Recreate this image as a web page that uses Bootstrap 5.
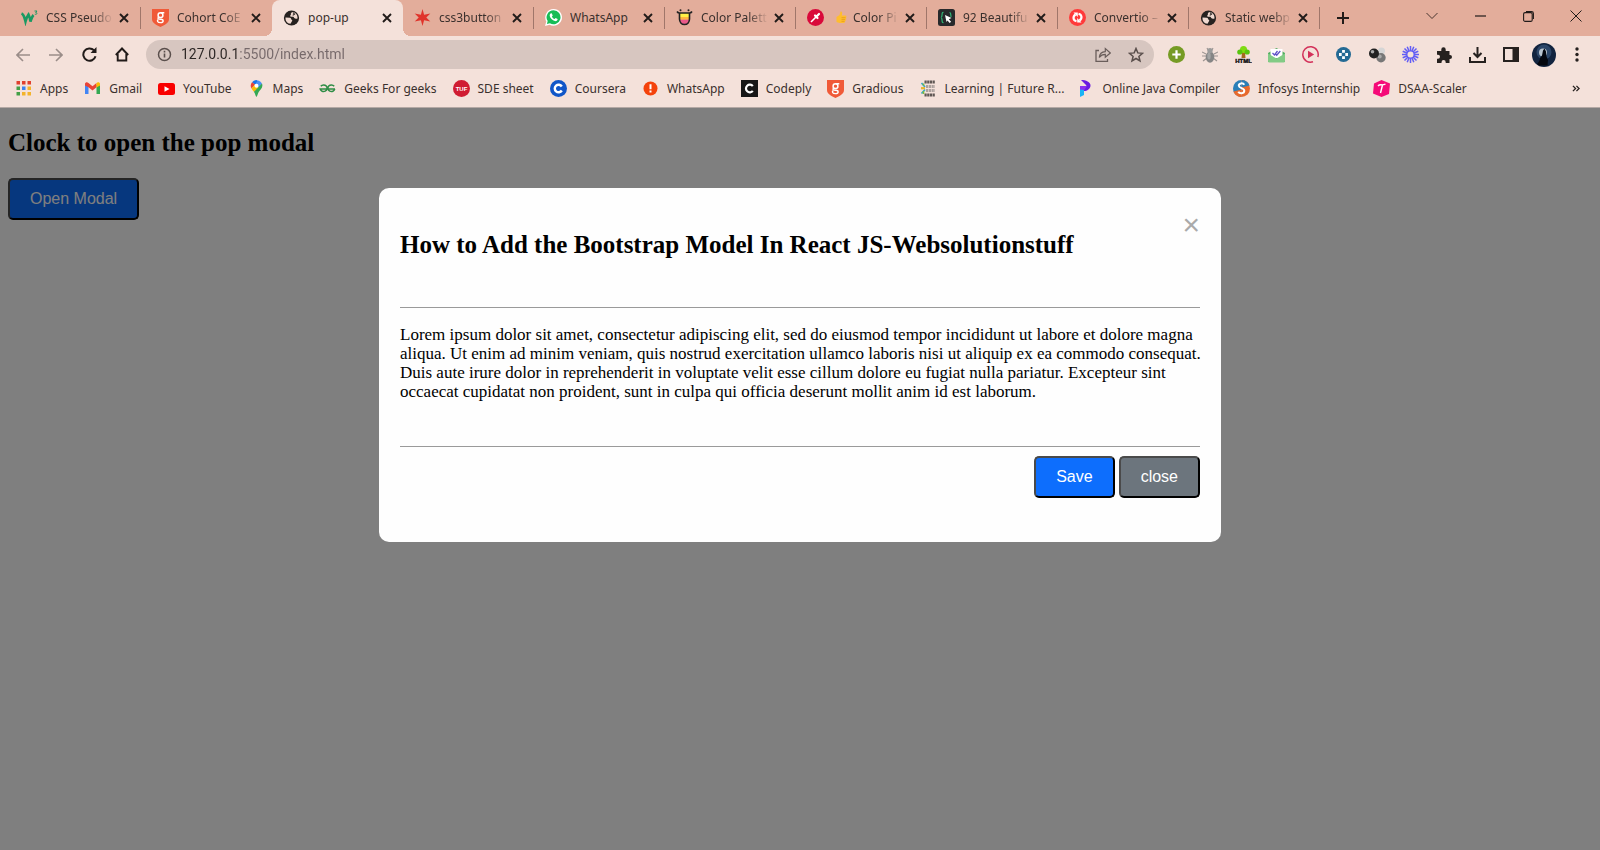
<!DOCTYPE html>
<html lang="en">
<head>
<meta charset="utf-8">
<meta name="viewport" content="width=device-width, initial-scale=1">
<title>pop-up</title>
<link rel="stylesheet" href="https://cdn.jsdelivr.net/npm/bootstrap@5.3.0/dist/css/bootstrap.min.css">
<script src="https://cdn.jsdelivr.net/npm/bootstrap@5.3.0/dist/js/bootstrap.bundle.min.js"></script>
<style>
  :root { --strip: #e3ad9b; --bar: #f4e1da; --ink: #3a302d; }
  body { font: 12px/18px "Noto Sans", sans-serif; color: var(--ink); background: #808080; }
  button { color: inherit; }
  svg { display: block; flex: none; }
  .bare { border: 0; background: none; padding: 0; display: flex; align-items: center; justify-content: center; }

  .tabstrip { background: var(--strip); height: 36px; padding-left: 10px; }
  .tab { flex: 0 1 131px; min-width: 0; height: 36px; padding: 0 11px 1px 11px; gap: 6px; position: relative; }
  .tab a { flex: 1 1 0; min-width: 0; gap: 8px; color: inherit; text-decoration: none; }
  .tab-name { flex: 1 1 0; overflow: hidden; white-space: nowrap;
    -webkit-mask-image: linear-gradient(to right, #000 70%, transparent); mask-image: linear-gradient(to right, #000 70%, transparent); }
  .tab-name.full { -webkit-mask-image: none; mask-image: none; }
  .tab.split { border-right: 1px solid #a97d70; border-image: linear-gradient(transparent 8px, #a0766a 8px, #a0766a 28px, transparent 28px) 1; }
  .tab.current { background: var(--bar); border-radius: 8px 8px 0 0; }
  .tab.current::before, .tab.current::after { content: ""; position: absolute; bottom: 0; width: 8px; height: 8px; }
  .tab.current::before { right: 100%; background: radial-gradient(circle at 0 0, transparent 8px, var(--bar) 8px); }
  .tab.current::after { left: 100%; background: radial-gradient(circle at 100% 0, transparent 8px, var(--bar) 8px); }
  .win { width: 48px; height: 32px; }
  .plus { width: 46px; }

  .toolbar { background: var(--bar); height: 37px; padding: 0 6px; }
  .tool { flex: 1 1 33px; height: 34px; }
  .travel { flex: 0 0 133px; }
  .extras { flex: 0 0 434px; }
  .address { background: #d7c6c0; border-radius: 15px; height: 29px; padding: 0 2px 0 11px; margin: 0 6px 0 7px; }
  .address .tool { flex: 0 0 33px; }
  .address input { border: 0; outline: 0; font: 14px/29px Roboto, sans-serif; height: 29px; padding: 0; margin-left: 9px; min-width: 0;
    background: linear-gradient(to right, #2c2624 58px, #76696a 58px); -webkit-background-clip: text; background-clip: text; color: transparent; }

  .bookmarks { background: var(--bar); height: 35px; padding: 0 20px 3px 15px; gap: 16px; border-bottom: 1px solid #b5a9a5; }
  .bookmarks .tail { gap: 13px; }
  .bookmarks a { gap: 8px; color: inherit; text-decoration: none; white-space: nowrap; }

  .page { font: 17px/19px "Liberation Serif", serif; color: #000; padding: 21px 8px; }
  .page h2 { font: bold 25px/28px "Liberation Serif", serif; margin: 0; }
  .page > h2 { margin-bottom: 21px; }
  .push { font: 16px/20px "Liberation Sans", sans-serif; color: #fff; border: 2px outset #000; border-color: #4a4a4a #000 #000 #4a4a4a; border-radius: 5px; padding: 9px 20px; }
  .push.blue { background: #0d6efd; }
  .push.grey { background: #6c757d; }
  .shade { position: absolute; inset: 0; background: rgba(0,0,0,.5); padding-top: 80px; }
  .sheet { background: #fefefe; border-radius: 10px; width: 94%; max-width: 842px; padding: 31px 21px 44px; }
  .dismiss { color: #aaa; font: 30px/12px "Liberation Sans", sans-serif; }
  .sheet hr { margin: 0; border-top: 1px solid #9a9a9a; opacity: 1; }
  .sheet p { margin: 17px -4px 45px 0; }
  .choices { gap: 4px; margin-top: 9px; }
</style>
</head>
<body class="d-flex flex-column min-vh-100">

<svg width="0" height="0" class="position-absolute" aria-hidden="true">
  <symbol id="x" viewBox="0 0 10 10"><path d="M1 1l8 8M9 1l-8 8" stroke="#211b19" stroke-width="1.9" fill="none"/></symbol>
  <symbol id="globe" viewBox="0 0 16 16"><circle cx="8" cy="8" r="7.6" fill="#26211f"/><path d="M2 7.500l4.500.3c1 .2 1.200 1 1.200 1.800 1.200.2 1.300 1.200.6 2L7 13.800C3.500 13.500 1.800 11 2 7.500zM9 1.900C7.500 2.500 7 3.500 7.500 4.500c-.8.600-1 1.500-.3 2.200 1 .4 2-.2 3 .3.500 1.800 2 2 3.800 1.400C14.300 5 12.500 2.500 9 1.900z" fill="#f0d9d0"/><path d="M9.500 2.500l1.500 1.700-1.800 1.200" fill="none" stroke="#26211f" stroke-width="1.100"/></symbol>
  <symbol id="gshield" viewBox="0 0 17 18"><path d="M0 0h17v10c0 4-4.500 6-8.500 8C4.500 16 0 14 0 10z" fill="#f05a38"/><circle cx="8.500" cy="6.200" r="2.400" fill="none" stroke="#fff" stroke-width="1.500"/><path d="M8.500 3.800h3.800M6.500 8.200c-1.200 1.600 0 2 2 2 3.500 0 3.500 3.400 0 3.400-3.300 0-3.600-2-2.300-3" fill="none" stroke="#fff" stroke-width="1.400"/></symbol>
</svg>

<header>
  <div class="tabstrip d-flex align-items-center">
    <div class="tab split d-flex align-items-center"><a href="#" class="d-flex align-items-center"><svg width="17" height="17" viewBox="0 0 17 17"><path d="M.5 4.500c2.500 1 3 4 4 8 .8-3 1.500-5 3-7 1 2 1.500 4 2 7 1-3 1.500-5 3-6.500" fill="none" stroke="#1a9a62" stroke-width="2.600"/><path d="M13.500 2h2.500l-1.300 1.500c2 0 1.600 2.200-.9 1.700" fill="none" stroke="#1a9a62" stroke-width="1"/></svg><span class="tab-name">CSS Pseudo</span></a><button class="bare" aria-label="Close tab"><svg width="10" height="10"><use href="#x"/></svg></button></div>
    <div class="tab d-flex align-items-center"><a href="#" class="d-flex align-items-center"><svg width="17" height="18"><use href="#gshield"/></svg><span class="tab-name">Cohort CoE</span></a><button class="bare" aria-label="Close tab"><svg width="10" height="10"><use href="#x"/></svg></button></div>
    <div class="tab current d-flex align-items-center"><a href="#" class="d-flex align-items-center"><svg width="17" height="16"><use href="#globe"/></svg><span class="tab-name full">pop-up</span></a><button class="bare" aria-label="Close tab"><svg width="10" height="10"><use href="#x"/></svg></button></div>
    <div class="tab split d-flex align-items-center"><a href="#" class="d-flex align-items-center"><svg width="17" height="17" viewBox="0 0 17 17"><path d="M8.500 0l1.600 5.700 6.200-1.200-4 4 4 4-6.200-1.200L8.500 17l-1.600-5.700-6.200 1.200 4-4-4-4 6.200 1.200z" fill="#e0342b"/></svg><span class="tab-name">css3button</span></a><button class="bare" aria-label="Close tab"><svg width="10" height="10"><use href="#x"/></svg></button></div>
    <div class="tab split d-flex align-items-center"><a href="#" class="d-flex align-items-center"><svg width="17" height="17" viewBox="0 0 17 17"><path d="M8.600 0a8.400 8.400 0 1 1-4 15.800L0 17l1.300-4.500A8.400 8.400 0 0 1 8.600 0z" fill="#fff"/><path d="M8.600 1.300a7 7 0 1 1-3.700 13L1.900 15l.8-2.900a7 7 0 0 1 5.900-10.800z" fill="#18bd56"/><path d="M5.500 4.500l1.200-.2 1 2.200-.8 1.200c.7 1.200 1.500 1.900 2.700 2.400l1-1 2 1c0 1.700-1.300 2.300-2.700 2C7.500 11.500 5 9 4.700 6.800c-.1-1 .2-1.800.8-2.300z" fill="#fff"/></svg><span class="tab-name full">WhatsApp</span></a><button class="bare" aria-label="Close tab"><svg width="10" height="10"><use href="#x"/></svg></button></div>
    <div class="tab split d-flex align-items-center"><a href="#" class="d-flex align-items-center"><svg width="17" height="17" viewBox="0 0 17 17"><path d="M3.500 4h10v6c0 3-2 5.500-5 5.500s-5-2.500-5-5.500z" fill="#fff046"/><path d="M3.500 8h10v2.500h-10z" fill="#ffb53e"/><path d="M3.600 10.500h9.800c-.4 3-2.200 5-4.900 5s-4.500-2-4.900-5z" fill="#ea5a8a"/><path d="M1 2.500C2 4 3 4 3.500 4h10c.5 0 1.500 0 2.500-1.500M3.500 4v6c0 3 2 5.500 5 5.500s5-2.500 5-5.500V4" fill="none" stroke="#222" stroke-width="1.600"/><circle cx="4.500" cy="1.300" r="1" fill="#222"/><circle cx="12.500" cy="1.300" r="1" fill="#222"/></svg><span class="tab-name">Color Palett</span></a><button class="bare" aria-label="Close tab"><svg width="10" height="10"><use href="#x"/></svg></button></div>
    <div class="tab split d-flex align-items-center"><a href="#" class="d-flex align-items-center"><svg width="17" height="17" viewBox="0 0 17 17"><circle cx="8.500" cy="8.500" r="8.500" fill="#d9093a"/><path d="M4 13l5.500-5.500" stroke="#fff" stroke-width="1.600"/><path d="M8 6.500l2.500 2.500M9.800 7.200L12 5" stroke="#fff" stroke-width="2.200" stroke-linecap="round"/></svg><span class="tab-name d-flex align-items-center gap-1"><svg width="17" height="15" viewBox="0 0 15 15"><path d="M3.500 7L6.500 5l1-3.500c1.800-.3 2 1 1.300 4h3.500c1.500 0 1.400 2 .5 2.200.8.500.5 1.900-.3 2 .5.700.1 1.700-.6 1.800.2.900-.4 1.500-1.400 1.500H6.500l-3-1z" fill="#ffbd2e"/><path d="M8.500 7.700h4M8.500 9.600h3.600M8.500 11.400h3" stroke="#dd8f13" stroke-width=".6"/></svg>Color Pi</span></a><button class="bare" aria-label="Close tab"><svg width="10" height="10"><use href="#x"/></svg></button></div>
    <div class="tab split d-flex align-items-center"><a href="#" class="d-flex align-items-center"><svg width="17" height="17" viewBox="0 0 17 17"><rect width="17" height="17" rx="2.500" fill="#28292b"/><path d="M5.500 3.500C3 3 5 8 3 8.500c2 .5 0 5.500 2.500 5M11.500 3.500c2 0 .8 3.500 1.800 4.500" stroke="#31b675" stroke-width="1.200" fill="none"/><path d="M7 6l6.500 3-2.700 1.200 2.300 2.600-1.400 1.200-2.200-2.600L8.500 13z" fill="#fff"/></svg><span class="tab-name">92 Beautifu</span></a><button class="bare" aria-label="Close tab"><svg width="10" height="10"><use href="#x"/></svg></button></div>
    <div class="tab split d-flex align-items-center"><a href="#" class="d-flex align-items-center"><svg width="17" height="17" viewBox="0 0 17 17"><circle cx="8.500" cy="8.500" r="8.500" fill="#ff3a3a"/><path d="M7.500 12.300C4 11.500 3.500 7.500 6.500 5.500M9.500 4.700c3.500.8 4 4.800 1 6.800" fill="none" stroke="#fff" stroke-width="2.200"/><path d="M4.500 3.500h4.300v4.600zM12.500 13.500H8.200V8.900z" fill="#fff"/></svg><span class="tab-name">Convertio –</span></a><button class="bare" aria-label="Close tab"><svg width="10" height="10"><use href="#x"/></svg></button></div>
    <div class="tab split d-flex align-items-center"><a href="#" class="d-flex align-items-center"><svg width="17" height="16"><use href="#globe"/></svg><span class="tab-name">Static webp</span></a><button class="bare" aria-label="Close tab"><svg width="10" height="10"><use href="#x"/></svg></button></div>
    <button class="bare win plus" aria-label="New tab"><svg width="12" height="12" viewBox="0 0 12 12"><path d="M6 0v12M0 6h12" stroke="#211b19" stroke-width="2"/></svg></button>
    <div class="d-flex ms-auto align-self-start">
      <button class="bare win" aria-label="Search tabs"><svg width="12" height="8" viewBox="0 0 12 8"><path d="M.5 1L6 6.500 11.500 1" fill="none" stroke="#49352f" stroke-width="1"/></svg></button>
      <button class="bare win" aria-label="Minimise"><svg width="11" height="2"><path d="M0 1h11" stroke="#211b19" stroke-width="1.200"/></svg></button>
      <button class="bare win" aria-label="Restore"><svg width="11" height="11" viewBox="0 0 11 11"><rect x=".6" y="1.600" width="8.600" height="8.800" rx="1.500" fill="none" stroke="#211b19" stroke-width="1.100"/><path d="M3 .6h5.500c1.300 0 1.900.8 1.900 1.900V8" fill="none" stroke="#211b19" stroke-width="1.100"/></svg></button>
      <button class="bare win" aria-label="Close window"><svg width="12" height="12" viewBox="0 0 12 12"><path d="M.5.5l11 11M11.500.5l-11 11" stroke="#211b19"/></svg></button>
    </div>
  </div>

  <nav class="toolbar d-flex align-items-center" aria-label="Browser toolbar">
    <div class="travel d-flex">
      <button class="bare tool" aria-label="Back"><svg width="14" height="14" viewBox="0 0 14 14"><path d="M14 7H1.500M7 1L1 7l6 6" fill="none" stroke="#9a8d89" stroke-width="1.600"/></svg></button>
      <button class="bare tool" aria-label="Forward"><svg width="14" height="14" viewBox="0 0 14 14"><path d="M0 7h12.500M7 1l6 6-6 6" fill="none" stroke="#9a8d89" stroke-width="1.600"/></svg></button>
      <button class="bare tool" aria-label="Reload"><svg width="15" height="15" viewBox="0 0 15 15"><path d="M13.500 9.300A6.200 6.200 0 1 1 12 3.300" fill="none" stroke="#211b19" stroke-width="2"/><path d="M14.500 0v6H8.500z" fill="#211b19"/></svg></button>
      <button class="bare tool" aria-label="Home"><svg width="14" height="15" viewBox="0 0 14 15"><path d="M2.700 7v6.500h8.600V7M.8 8L7 1.500 13.200 8" fill="none" stroke="#211b19" stroke-width="1.900"/></svg></button>
    </div>
    <div class="address d-flex align-items-center flex-grow-1">
      <svg width="15" height="15" viewBox="0 0 15 15"><circle cx="7.500" cy="7.500" r="6" fill="none" stroke="#5a4f4c" stroke-width="1.500"/><path d="M7.500 6.600v4M7.500 3.800v1.600" stroke="#5a4f4c" stroke-width="1.600"/></svg>
      <input class="flex-grow-1" type="text" aria-label="Address" value="127.0.0.1:5500/index.html">
      <button class="bare tool" aria-label="Share"><svg width="16" height="15" viewBox="0 0 16 15"><path d="M4 3.500H1v10.800h11.500V12" fill="none" stroke="#6a5e5b" stroke-width="1.300"/><path d="M4.300 10.500c.3-4 2.500-5.700 6-5.800V1.500L15.300 6l-5 4.300V7.400c-2.500 0-4.500.8-6 3.100z" fill="none" stroke="#6a5e5b" stroke-width="1.200"/></svg></button>
      <button class="bare tool" aria-label="Bookmark this page"><svg width="16" height="16" viewBox="0 0 16 16"><path d="M8 1.500l1.800 4.400 4.700.4-3.600 3.100 1.100 4.600L8 11.500 4 14l1.100-4.600L1.500 6.300l4.700-.4z" fill="none" stroke="#5a4f4c" stroke-width="1.500"/></svg></button>
    </div>
    <div class="extras d-flex">
      <button class="bare tool" aria-label="Add"><svg width="17" height="17" viewBox="0 0 17 17"><circle cx="8.500" cy="8.500" r="8.500" fill="#769b24"/><path d="M8.500 4.300v8.400M4.300 8.500h8.400" stroke="#fff" stroke-width="2.200"/></svg></button>
      <button class="bare tool" aria-label="Debugger"><svg width="16" height="16" viewBox="0 0 16 16"><path d="M0 5l4 2M0 9h4M1 14l4-3M16 5l-4 2M16 9h-4M15 14l-4-3M5 1l1 2M11 1l-1 2" stroke="#9b9491" stroke-width="1.100"/><ellipse cx="8" cy="10" rx="4.300" ry="5.800" fill="#858585"/><circle cx="8" cy="3.600" r="2.700" fill="#9b9b9b"/><ellipse cx="7" cy="9" rx="1.700" ry="3.500" fill="#a5a5a5"/></svg></button>
      <button class="bare tool" aria-label="HTML tree"><svg width="17" height="17" viewBox="0 0 17 17"><path d="M7 6h3l.5 6h-4z" fill="#a3681d"/><circle cx="8.500" cy="3.500" r="3.500" fill="#7fdb12"/><circle cx="4.800" cy="6" r="2.600" fill="#58c40e"/><circle cx="12.200" cy="6" r="2.600" fill="#58c40e"/><text x="8.500" y="16.700" font-family="Liberation Sans, sans-serif" font-weight="bold" font-size="6" text-anchor="middle" fill="#111" stroke="#111" stroke-width=".4">HTML</text></svg></button>
      <button class="bare tool" aria-label="Mail tracker"><svg width="17" height="16" viewBox="0 0 17 16"><path d="M0 6l8.500-5L17 6v9H0z" fill="#54ad62"/><path d="M2.500 2h12v9h-12z" fill="#fff"/><path d="M0 6.500l8.500 5 8.500-5V14a1.500 1.500 0 0 1-1.500 1.500h-14A1.500 1.500 0 0 1 0 14z" fill="#82cb85"/><path d="M4.500 6l2 2 3-4M7.500 7l1.200 1.200L12.300 4" fill="none" stroke="#6252c9" stroke-width="1.300"/></svg></button>
      <button class="bare tool" aria-label="Player"><svg width="17" height="17" viewBox="0 0 17 17"><path d="M15.800 11A7.700 7.700 0 1 0 11 15.800" fill="none" stroke="#d3315a" stroke-width="1.500"/><path d="M6 4.800l6.200 3.700L6 12.200z" fill="#d3315a"/></svg></button>
      <button class="bare tool" aria-label="Move tool"><svg width="15" height="15" viewBox="0 0 15 15"><circle cx="7.500" cy="7.500" r="7.500" fill="#246a94"/><path d="M7.500 3v2.700M7.500 12V9.300M3 7.500h2.700M12 7.500H9.300" stroke="#fff" stroke-width="2.800"/></svg></button>
      <button class="bare tool" aria-label="Spheres"><svg width="17" height="16" viewBox="0 0 17 16"><circle cx="12.500" cy="4" r="3.500" fill="#d5d5d5"/><circle cx="12" cy="10.800" r="4.700" fill="#777"/><circle cx="10.700" cy="9.500" r="2" fill="#aaa"/><circle cx="5" cy="6.500" r="5" fill="#222"/><circle cx="3.500" cy="4.800" r="1.800" fill="#aaa"/></svg></button>
      <button class="bare tool" aria-label="Loom"><svg width="17" height="17" viewBox="0 0 17 17"><g stroke="#625df5" stroke-width="1.500"><path d="M8.500 0v17M0 8.500h17M2.500 2.500l12 12M14.500 2.500l-12 12M5.200.7l6.600 15.600M11.800.7L5.200 16.300M.7 5.200l15.600 6.600M.7 11.800l15.600-6.600"/></g><circle cx="8.500" cy="8.500" r="3" fill="#f4e1da"/></svg></button>
      <button class="bare tool" aria-label="Extensions"><svg width="16" height="16" viewBox="0 0 16 16"><path d="M1 4h4.300V2.500a2.200 2.200 0 0 1 4.400 0V4H13.500v4H14a2 2 0 0 1 0 4h-.5v4H9.700v-.8a2.100 2.100 0 0 0-4.200 0v.8H1v-4.300h1a2 2 0 0 0 0-4H1z" fill="#26211f"/></svg></button>
      <button class="bare tool" aria-label="Downloads"><svg width="17" height="16" viewBox="0 0 17 16"><path d="M8.500 0v9M4.500 6l4 4 4-4M1 10v5h15v-5" fill="none" stroke="#26211f" stroke-width="2"/></svg></button>
      <button class="bare tool" aria-label="Side panel"><svg width="16" height="15" viewBox="0 0 16 15"><rect x="1" y="1" width="14" height="13" fill="none" stroke="#26211f" stroke-width="2"/><path d="M9.500 1H15v13H9.500z" fill="#26211f"/></svg></button>
      <button class="bare tool" aria-label="Profile"><svg width="24" height="24" viewBox="0 0 24 24"><circle cx="12" cy="12" r="12" fill="#12243f"/><circle cx="12" cy="9" r="7.500" fill="#2c4668"/><circle cx="11" cy="9.500" r="4" fill="#b9c5cf"/><path d="M5 21c2-2 3-4 3-6l2-2.500 1-5 1.500-2 1.500 3 .5 5 1.500 3.500-.5 5.500H7z" fill="#04070e"/></svg></button>
      <button class="bare tool" aria-label="Menu"><svg width="4" height="15" viewBox="0 0 4 15"><g fill="#26211f"><circle cx="2" cy="2" r="1.700"/><circle cx="2" cy="7.500" r="1.700"/><circle cx="2" cy="13" r="1.700"/></g></svg></button>
    </div>
  </nav>

  <nav class="bookmarks d-flex align-items-center" aria-label="Bookmarks">
    <a href="#" class="d-flex align-items-center"><svg width="17" height="15" viewBox="0 0 17 15"><path d="M1.500 0h3.500v3.500H1.500zM7 0h3.500v3.500H7zM12.500 0H16v3.500h-3.500z" fill="#e0402f"/><path d="M1.500 5.500h3.500V9H1.500zM1.500 11h3.500v3.500H1.500z" fill="#43a047"/><path d="M7 5.500h3.500V9H7z" fill="#3b82f0"/><path d="M7 11h3.500v3.500H7zM12.500 11H16v3.500h-3.500zM12.500 5.500H16V9h-3.500z" fill="#f3b32b"/></svg>Apps</a>
    <a href="#" class="d-flex align-items-center"><svg width="17" height="13" viewBox="0 0 17 13"><path d="M1 2h3.500v10H1z" fill="#4285f4"/><path d="M12.500 3H16v9h-3.500z" fill="#34a853"/><path d="M1 1.500C2-.2 3.500.2 4.500 1l4 3.200 4-3.200v4.300l-4 3.200-4-3.200L1 3.500z" fill="#ea4335"/><path d="M12.500 1c1.500-1.300 3.500-.5 3.500 1v1.500l-3.500 2z" fill="#fbbc04"/></svg>Gmail</a>
    <a href="#" class="d-flex align-items-center"><svg width="17" height="12" viewBox="0 0 17 12"><rect width="17" height="12" rx="2.500" fill="#f90000"/><path d="M6.500 3.200l5 2.800-5 2.800z" fill="#fff"/></svg>YouTube</a>
    <a href="#" class="d-flex align-items-center"><svg width="17" height="17" viewBox="0 0 17 17"><path d="M8.500 0A5.800 5.800 0 0 0 4 2.200l3 2.600L10.300 1z" fill="#1a73e8"/><path d="M4 2.200c-1.800 2.200-1.500 4.500-.5 6.300l3.700-4z" fill="#ea4335"/><path d="M10.300.4L7 4.500l4 3.300 3-4C13 1.800 11.500.8 10.300.4z" fill="#4c91f5"/><path d="M3.500 8.500c.7 1.200 1.600 2.200 2.400 3.300L11 7.800 6.900 4.500z" fill="#fbbc04"/><path d="M14 3.500c1.500 4-1.700 6-3.300 8.500-1 1.500-1 3.500-2.200 5-1.200-1.500-1.200-3.400-2.600-5.200z" fill="#34a853"/><circle cx="8.500" cy="5.700" r="2" fill="#fff"/></svg>Maps</a>
    <a href="#" class="d-flex align-items-center"><svg width="17" height="10" viewBox="0 0 17 10"><path d="M1.800 2.200A3.500 3.300 0 1 1 1.200 5H16M15.200 2.200A3.500 3.300 0 1 0 15.800 5" fill="none" stroke="#2f8d46" stroke-width="1.500"/></svg>Geeks For geeks</a>
    <a href="#" class="d-flex align-items-center"><svg width="17" height="17" viewBox="0 0 17 17"><circle cx="8.500" cy="8.500" r="8.500" fill="#d01c32"/><text x="8.500" y="10.700" font-family="Liberation Sans, sans-serif" font-weight="bold" font-size="6" text-anchor="middle" fill="#fff">TUF</text></svg>SDE sheet</a>
    <a href="#" class="d-flex align-items-center"><svg width="17" height="17" viewBox="0 0 17 17"><circle cx="8.500" cy="8.500" r="8.500" fill="#1156c8"/><path d="M11.800 6.500a3.800 3.800 0 1 0 0 4" fill="none" stroke="#fff" stroke-width="2.400"/></svg>Coursera</a>
    <a href="#" class="d-flex align-items-center"><svg width="17" height="15" viewBox="0 0 17 15"><circle cx="8.500" cy="7.500" r="7" fill="#f4420b"/><path d="M8.500 3.300v5M8.500 9.500v2" stroke="#fff" stroke-width="2"/></svg>WhatsApp</a>
    <a href="#" class="d-flex align-items-center"><svg width="17" height="17" viewBox="0 0 17 17"><path d="M0 0h17v17H0z" fill="#171717"/><path d="M11.800 6.200a3.800 3.800 0 1 0 0 4.600" fill="none" stroke="#fff" stroke-width="2.200"/></svg>Codeply</a>
    <a href="#" class="d-flex align-items-center"><svg width="17" height="18"><use href="#gshield"/></svg>Gradious</a>
    <div class="tail d-flex align-items-center">
      <a href="#" class="d-flex align-items-center"><svg width="17" height="17" viewBox="0 0 17 17"><path d="M5.500 2H16M5.500 15H16" stroke="#5f5754" stroke-width="3" stroke-dasharray="2.200 .5"/><path d="M7 6.500h9M7 10.500h9" stroke="#aba19d" stroke-width="3" stroke-dasharray="2.200 .6"/><path d="M2.500 3l3.500 4M2.500 13.500L6 9.500" stroke="#2fa6c9" stroke-width="1.600"/><path d="M2 8.200h4" stroke="#e7b52b" stroke-width="2.200"/><path d="M4.500 3.500v2M4.500 11v3" stroke="#7dbb3b" stroke-width="1.600"/></svg>Learning | Future R...</a>
      <a href="#" class="d-flex align-items-center"><svg width="17" height="17" viewBox="0 0 17 17"><path d="M4 0c5 0 9.500 2 9.500 5.500S10 11 7 11V8l2.500-2.500z" fill="#6a1be0"/><path d="M3 6h7L7 10.500 3 12z" fill="#8a2ff0"/><path d="M3 9.500l4 .5v5l-4 2z" fill="#1ab3f5"/></svg>Online Java Compiler</a>
      <a href="#" class="d-flex align-items-center"><svg width="17" height="17" viewBox="0 0 17 17"><path d="M8.500 0a8.500 8.500 0 0 0 0 17z" fill="#2a7fb8"/><path d="M8.500 0a8.500 8.500 0 0 1 0 17z" fill="#e8692c"/><path d="M8.500 0a8.500 8.500 0 0 1 8 5.500l-8 2z" fill="#2a7fb8"/><path d="M.5 11.500l8-2V17C5 17 1.500 15 .5 11.500z" fill="#e8692c"/><path d="M11.300 4.800C10 2.500 5.500 3 5.800 5.800c.2 2.700 5.500 2 5.500 5 0 3-4.800 3.200-6 .9" fill="none" stroke="#fff" stroke-width="2"/></svg>Infosys Internship</a>
      <a href="#" class="d-flex align-items-center"><svg width="17" height="17" viewBox="0 0 17 17"><path d="M8.500 0L17 3.500 16 14l-7.500 3L0 13.500 1 3.500z" fill="#f50a78"/><path d="M5 6c2-2.500 4 0 7.500-2M9.500 5L7.500 13" fill="none" stroke="#fff" stroke-width="1.400"/></svg>DSAA-Scaler</a>
    </div>
    <button class="bare ms-auto" aria-label="More bookmarks"><svg width="8" height="7" viewBox="0 0 9 8"><path d="M1 1l3 3-3 3M5 1l3 3-3 3" fill="none" stroke="#26211f" stroke-width="1.500"/></svg></button>
  </nav>
</header>

<main class="page bg-white flex-grow-1 position-relative">
  <h2>Clock to open the pop modal</h2>
  <button class="push blue" type="button">Open Modal</button>

  <div class="shade">
    <section class="sheet mx-auto" role="dialog" aria-labelledby="sheet-title">
      <div class="d-flex justify-content-end"><button class="bare dismiss" type="button" aria-label="Close">&times;</button></div>
      <h2 id="sheet-title">How to Add the Bootstrap Model In React JS-Websolutionstuff</h2>
      <hr class="mt-5">
      <p>Lorem ipsum dolor sit amet, consectetur adipiscing elit, sed do eiusmod tempor incididunt ut labore et dolore magna aliqua. Ut enim ad minim veniam, quis nostrud exercitation ullamco laboris nisi ut aliquip ex ea commodo consequat. Duis aute irure dolor in reprehenderit in voluptate velit esse cillum dolore eu fugiat nulla pariatur. Excepteur sint occaecat cupidatat non proident, sunt in culpa qui officia deserunt mollit anim id est laborum.</p>
      <hr>
      <div class="choices d-flex justify-content-end">
        <button class="push blue" type="button">Save</button>
        <button class="push grey" type="button">close</button>
      </div>
    </section>
  </div>
</main>
</body>
</html>
